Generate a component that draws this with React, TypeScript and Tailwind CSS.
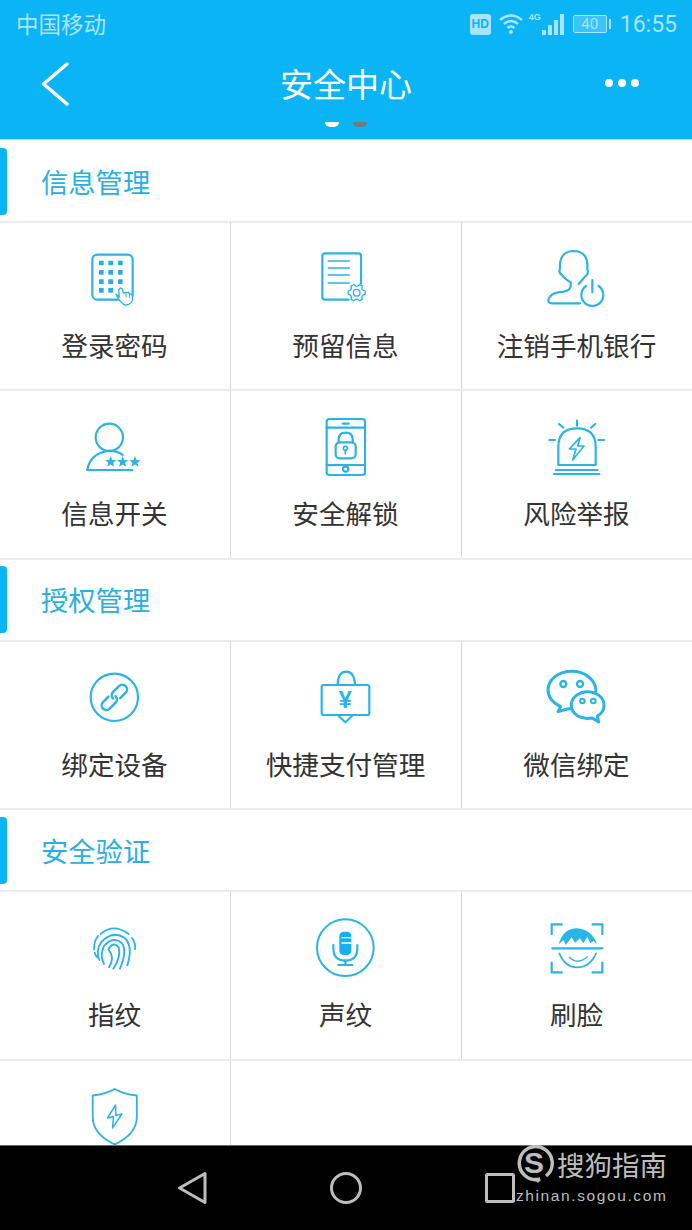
import type { ReactNode } from 'react'

const CJK = 'font-["Noto_Sans_CJK_SC","Noto_Sans",sans-serif]'
const BLUE = '#2cb3e6'

// icons are traced at 3x, so every one is a 90x90 tile on a 270 unit grid
function Tile({ box, children }: { box: string; children: ReactNode }) {
    return (
        <svg
            width={90}
            height={90}
            viewBox={box}
            fill="none"
            stroke={BLUE}
            strokeWidth={6.5}
            strokeLinecap="round"
            strokeLinejoin="round"
        >
            {children}
        </svg>
    )
}

function starPoints(cx: number, cy: number, r: number) {
    const pts: string[] = []
    for (let i = 0; i < 10; i++) {
        const rad = i % 2 === 0 ? r : r * 0.42
        const a = (Math.PI / 5) * i - Math.PI / 2
        pts.push(`${cx + rad * Math.cos(a)},${cy + rad * Math.sin(a)}`)
    }
    return pts.join(' ')
}

function gearPoints(cx: number, cy: number, outer: number, inner: number, teeth: number) {
    const pts: string[] = []
    for (let i = 0; i < teeth; i++) {
        const a = ((Math.PI * 2) / teeth) * i
        const w = (Math.PI * 2) / teeth / 4.5
        pts.push(`${cx + inner * Math.cos(a - w * 1.6)},${cy + inner * Math.sin(a - w * 1.6)}`)
        pts.push(`${cx + outer * Math.cos(a - w * 0.8)},${cy + outer * Math.sin(a - w * 0.8)}`)
        pts.push(`${cx + outer * Math.cos(a + w * 0.8)},${cy + outer * Math.sin(a + w * 0.8)}`)
        pts.push(`${cx + inner * Math.cos(a + w * 1.6)},${cy + inner * Math.sin(a + w * 1.6)}`)
    }
    return pts.join(' ')
}

const KeypadIcon = () => (
    <Tile box="30 0 270 270">
        <rect x={97} y={59} width={121} height={135} rx={15} />
        {[84, 112, 140, 166].map((y) =>
            [124, 152, 181].map((x) =>
                y === 166 && x === 181 ? null : (
                    <rect key={`${x}-${y}`} x={x - 7} y={y - 7} width={14} height={14} rx={1} fill="#25aee6" stroke="none" />
                ),
            ),
        )}
        <path
            d="M168 178 L178 186 L176 164 Q182 154 188 164 L190 174 L204 172 L216 180 Q220 194 214 202 Q204 213 192 209 Q178 200 168 178 Z"
            fill="#fff"
            strokeWidth={4}
        />
        <path d="M198 174 V186 M208 177 V188" strokeWidth={3} />
    </Tile>
)

const ReservedInfoIcon = () => (
    <Tile box="723 0 270 270">
        <path d="M866 194 H795 Q787 194 787 186 V63 Q787 55 795 55 H895 Q903 55 903 63 V146" />
        <path d="M805 78 H868 M805 99 H868 M805 120 H868 M805 144 H868" strokeWidth={5} />
        <polygon points={gearPoints(890, 173, 26, 20, 6)} strokeWidth={4} />
        <circle cx={890} cy={173} r={10} strokeWidth={4} />
    </Tile>
)

const LogoutIcon = () => (
    <Tile box="6 0 270 270">
        <path d="M150 205 H66 Q54 205 55 195 Q60 175 85 172 Q118 170 122 155 V142 Q104 132 96 120 Q84 112 90 102 Q86 50 130 48 Q176 48 172 102 Q178 116 165 125 L146 147" />
        <path d="M168 153 A33 33 0 1 0 206 153" />
        <path d="M187 135 V172" />
    </Tile>
)

const PersonStarsIcon = () => (
    <Tile box="0 -21 270 270">
        <circle cx={118} cy={82} r={41} />
        <path d="M52 180 Q60 130 118 122 Q145 124 158 135" />
        <path d="M52 180 H187" />
        {[122, 158, 195].map((x) => (
            <polygon key={x} points={starPoints(x, 156, 18)} fill={BLUE} stroke="none" />
        ))}
    </Tile>
)

const PhoneLockIcon = () => (
    <Tile box="693 -21 270 270">
        <rect x={770} y={27} width={115} height={168} rx={8} />
        <path d="M770 53 H885 M770 165 H885" />
        <path d="M818 41 H836" />
        <circle cx={827} cy={177} r={8} />
        <rect x={797} y={97} width={60} height={48} rx={12} />
        <path d="M806 97 V88 Q806 68 827 68 Q848 68 848 88 V97" />
        <circle cx={826} cy={115} r={6} strokeWidth={5} />
        <path d="M826 121 V132" strokeWidth={5} />
    </Tile>
)

const AlarmIcon = () => (
    <Tile box="6 -21 270 270">
        <path d="M85 165 V110 Q85 55 141 55 Q197 55 197 110 V165 Z" />
        <path d="M77 180 H203 M72 192 H208" />
        <path d="M141 32 V47 M87 42 L100 53 M196 42 L183 53 M58 90 H75 M205 90 H222" />
        <path d="M150 83 L118 117 H138 L128 150 L162 108 H143 Z" strokeWidth={5} />
    </Tile>
)

const LinkIcon = () => (
    <Tile box="0 -18 270 270">
        <circle cx={133} cy={112} r={71} />
        <g transform="rotate(-45 133 112)" strokeWidth={7.5}>
            <path d="M122 98 H99 A14 14 0 0 0 99 126 H124 A14 14 0 0 0 138 112" />
            <path d="M128 112 A14 14 0 0 1 142 98 H167 A14 14 0 0 1 167 126 H144" />
        </g>
    </Tile>
)

const PayBagIcon = () => (
    <Tile box="693 -18 270 270">
        <rect x={755} y={75} width={143} height={90} rx={6} />
        <path d="M803 72 Q805 35 828 35 Q852 35 855 72" />
        <path d="M805 167 L826 187 L847 167" />
        <text
            x={826}
            y={143}
            textAnchor="middle"
            fontSize={70}
            fontWeight={700}
            fontFamily="Liberation Sans"
            fill={BLUE}
            stroke="none"
        >
            ¥
        </text>
    </Tile>
)

const WechatIcon = () => (
    <Tile box="6 -18 270 270">
        <g strokeWidth={9}>
            <path d="M92 140 C68 128 54 110 54 90 C54 58 86 34 125 34 C164 34 196 58 198 92 C196 118 150 146 112 147 L84 155 Z" />
            <circle cx={100} cy={72} r={9} strokeWidth={7} />
            <circle cx={150} cy={72} r={9} strokeWidth={7} />
            <path
                d="M173 95 C200 95 222 113 222 135 C222 150 214 162 202 168 L206 186 L186 174 C148 180 124 160 124 135 C124 113 146 95 173 95 Z"
                fill="#fff"
            />
            <circle cx={157} cy={123} r={7} strokeWidth={6} />
            <circle cx={190} cy={123} r={7} strokeWidth={6} />
        </g>
    </Tile>
)

const FingerprintIcon = () => (
    <Tile box="0 -18 270 270">
        <g strokeWidth={5.5}>
            <path d="M92 72 Q130 38 176 72" />
            <path d="M72 118 Q72 92 84 78" />
            <path d="M186 84 Q198 100 195 118" />
            <path d="M74 128 Q76 136 82 142" />
            <path d="M88 150 Q76 122 94 96 Q128 60 164 84 Q190 108 172 166" />
            <path d="M102 162 Q88 136 102 108 Q130 76 156 100 Q172 124 150 176" />
            <path d="M117 172 Q136 142 115 118 Q130 92 146 112 Q154 140 130 176" />
        </g>
    </Tile>
)

const MicIcon = () => (
    <Tile box="693 -18 270 270">
        <circle cx={826} cy={113} r={85} strokeWidth={6} />
        <rect x={808} y={65} width={36} height={70} rx={13} fill="#12b1f0" stroke="none" />
        <path d="M816 83 H844 M816 99 H844" stroke="#fff" strokeWidth={4} />
        <path d="M790 105 V115 Q790 152 826 152 Q862 152 862 115 V105" />
        <path d="M826 152 V165 M805 165 H847" />
    </Tile>
)

const FaceIcon = () => (
    <Tile box="6 -18 270 270">
        <path d="M65 75 V43 H98 M185 43 H217 V75 M65 155 V187 H98 M185 187 H217 V155" strokeLinecap="butt" strokeLinejoin="miter" />
        <path d="M67 115 H217" />
        <path
            d="M86 103 Q100 55 141 55 Q185 58 201 103 L190 93 L181 100 L172 80 L160 100 L150 85 L135 98 L125 82 L107 105 L101 90 Z"
            fill="#29b4ea"
            stroke="none"
        />
        <path d="M88 130 Q105 172 141 172 Q180 172 198 130" strokeWidth={5} />
        <path d="M118 142 Q142 166 172 140" strokeWidth={4} />
    </Tile>
)

// this one was traced from a wider crop, so the x range is narrower
const ShieldIcon = () => (
    <svg width={90} height={90} viewBox="70 1073 90 90" fill="none" stroke={BLUE} strokeLinejoin="round">
        <path
            d="M114.7 1089 Q106 1094 92.7 1095.5 V1117 Q92.7 1134 114.7 1144.5 Q136.8 1134 136.8 1117 V1095.5 Q123 1094 114.7 1089 Z"
            strokeWidth={1.8}
        />
        <path d="M115.6 1105 L107.5 1118 L113.5 1116.5 L112.5 1128 L121.8 1114 L115.8 1115.5 Z" strokeWidth={1.5} />
    </svg>
)

type Item = { label?: string; icon: ReactNode }

const sections: { title: string; items: Item[] }[] = [
    {
        title: '信息管理',
        items: [
            { label: '登录密码', icon: <KeypadIcon /> },
            { label: '预留信息', icon: <ReservedInfoIcon /> },
            { label: '注销手机银行', icon: <LogoutIcon /> },
            { label: '信息开关', icon: <PersonStarsIcon /> },
            { label: '安全解锁', icon: <PhoneLockIcon /> },
            { label: '风险举报', icon: <AlarmIcon /> },
        ],
    },
    {
        title: '授权管理',
        items: [
            { label: '绑定设备', icon: <LinkIcon /> },
            { label: '快捷支付管理', icon: <PayBagIcon /> },
            { label: '微信绑定', icon: <WechatIcon /> },
        ],
    },
    {
        title: '安全验证',
        items: [
            { label: '指纹', icon: <FingerprintIcon /> },
            { label: '声纹', icon: <MicIcon /> },
            { label: '刷脸', icon: <FaceIcon /> },
            // label of this one sits under the nav bar
            { icon: <ShieldIcon /> },
        ],
    },
]

function StatusBar() {
    return (
        <div className="h-[48px] flex items-center justify-between pl-[16px] pr-[15px] text-[#a9e4fb]">
            <span className={`${CJK} text-[22.5px] leading-none -mt-[2px]`}>中国移动</span>
            <div className="flex items-center">
                <span className="w-[21px] h-[21px] rounded-[3px] bg-[#a9e4fb] text-[#0bb5f5] text-[12px] font-bold flex items-center justify-center font-['Liberation_Sans',sans-serif]">
                    HD
                </span>
                <svg width={26} height={22} viewBox="0 0 26 22" fill="none" stroke="#a9e4fb" strokeWidth={2.5} className="ml-[7px]">
                    <path d="M2 7 Q13 -2 24 7" />
                    <path d="M6 11 Q13 5 20 11" />
                    <path d="M9.5 15 Q13 12 16.5 15" />
                    <circle cx={13} cy={19} r={2} fill="#a9e4fb" stroke="none" />
                </svg>
                <div className="ml-[5px] relative w-[35px] h-[22px]">
                    <span className="absolute left-0 top-0 text-[9px] leading-none font-bold font-['Liberation_Sans',sans-serif]">4G</span>
                    <div className="absolute right-0 bottom-0 flex items-end gap-[2px]">
                        <span className="w-[4px] h-[5px] bg-[#a9e4fb]" />
                        <span className="w-[4px] h-[10px] bg-[#a9e4fb]" />
                        <span className="w-[4px] h-[15px] bg-[#a9e4fb]" />
                        <span className="w-[4px] h-[21px] bg-[#a9e4fb]" />
                    </div>
                </div>
                <div className="ml-[9px] w-[34px] h-[18px] border border-[#a9e4fb] rounded-[2px] bg-[#5fcdf8]/60 flex items-center justify-center text-[15px] leading-none font-['Roboto',sans-serif]">
                    40
                </div>
                <span className="ml-[2px] w-[2px] h-[10px] bg-[#a9e4fb]" />
                <span className="ml-[9px] text-[23px] leading-none font-['Roboto',sans-serif]">16:55</span>
            </div>
        </div>
    )
}

function TopBar() {
    return (
        <header className="bg-[#0bb5f5] shrink-0 h-[140px] border-b border-[#9fe6fb]">
            <StatusBar />
            <div className="h-[72px] flex items-center justify-center">
                <div className="w-[280px] shrink-0 pl-[40px]">
                    <svg width={30} height={46} viewBox="0 0 30 46" fill="none" stroke="#fff" strokeWidth={3.5} strokeLinecap="round" strokeLinejoin="round">
                        <path d="M27 3 L3.5 23 L27 43" />
                    </svg>
                </div>
                <h1 className={`${CJK} text-[33px] leading-none text-white font-normal -mt-[2px] whitespace-nowrap`}>安全中心</h1>
                <div className="w-[280px] shrink-0 flex justify-end gap-[5px] pr-[53px] -mt-[2px]">
                    <span className="w-[8px] h-[8px] rounded-full bg-white" />
                    <span className="w-[8px] h-[8px] rounded-full bg-white" />
                    <span className="w-[8px] h-[8px] rounded-full bg-white" />
                </div>
            </div>
            <div className="flex justify-center gap-[14px] pt-[2px]">
                <span className="w-[14px] h-[5px] rounded-b-full bg-white" />
                <span className="w-[14px] h-[5px] rounded-b-full bg-[#6f7a80]" />
            </div>
        </header>
    )
}

function NavBar() {
    return (
        <footer className="relative shrink-0 h-[85px] bg-black border-t border-[#666] flex items-center justify-center gap-[114px]">
            <svg width={40} height={40} viewBox="0 0 40 40" fill="none" stroke="#bdbdbd" strokeWidth={3} strokeLinejoin="round">
                <path d="M33 5.5 V34.5 L7.5 20 Z" />
            </svg>
            <svg width={40} height={40} viewBox="0 0 40 40" fill="none" stroke="#bdbdbd" strokeWidth={3}>
                <circle cx={20} cy={20} r={14.5} />
            </svg>
            <svg width={40} height={40} viewBox="0 0 40 40" fill="none" stroke="#bdbdbd" strokeWidth={3} strokeLinejoin="round">
                <rect x={6.5} y={6.5} width={27} height={27} rx={1} />
            </svg>
            {/* watermark */}
            <div className="absolute left-[516px] top-0 w-[152px] h-[70px] text-[#bdbdbd]">
                <svg width={38} height={40} viewBox="0 0 38 40" className="absolute left-0 -top-[1px]" fill="none" stroke="#bdbdbd">
                    <path d="M30 31 A16.5 16.5 0 1 0 24 34" strokeWidth={3.5} />
                    <path d="M24 34 L21 37" strokeWidth={2.5} />
                    <text x={18} y={28} textAnchor="middle" fontSize={30} fontWeight={700} fontFamily="Liberation Sans" fill="#bdbdbd" stroke="none">
                        S
                    </text>
                </svg>
                <span className={`${CJK} absolute left-[41px] top-[1px] text-[27.5px] leading-[34px] whitespace-nowrap`}>搜狗指南</span>
                <span className="absolute left-0 top-[40px] text-[15.5px] leading-[20px] tracking-[1.6px] whitespace-nowrap font-['Liberation_Sans',sans-serif]">
                    zhinan.sogou.com
                </span>
            </div>
        </footer>
    )
}

export default function App() {
    return (
        <div className={`${CJK} w-full h-[1230px] flex flex-col overflow-hidden bg-white`}>
            <TopBar />
            <main className="flex-1 min-h-0 overflow-hidden">
                {sections.map((section, s) => (
                    <section key={section.title}>
                        <div className={`flex items-center ${s === 0 ? 'h-[81px] pt-[2px]' : 'h-[82px] border-t-2 border-[#ececec]'}`}>
                            <span className="w-[7px] h-[67px] rounded-r-[4px] bg-[#0bb5f5]" />
                            <h2 className="ml-[34px] text-[27.3px] leading-none font-normal text-[#2daee0]">{section.title}</h2>
                        </div>
                        <div className="grid grid-cols-[231px_231px_230px]">
                            {section.items.map((item, i) => (
                                <div
                                    key={`${section.title}-${i}`}
                                    className={`h-[168.4px] border-t-2 border-t-[#ececec] pt-[12px] flex flex-col items-center ${
                                        i % 3 === 2 ? '' : 'border-r border-r-[#d9d9d9]'
                                    }`}
                                >
                                    <div className="w-[90px] h-[90px]">{item.icon}</div>
                                    {item.label && (
                                        <span className="mt-[2px] pr-[1px] text-[26.6px] leading-[36px] text-[#333] whitespace-nowrap">{item.label}</span>
                                    )}
                                </div>
                            ))}
                            {section.items.length % 3 === 1 && <div className="col-span-2 border-t-2 border-t-[#ececec]" />}
                        </div>
                    </section>
                ))}
            </main>
            <NavBar />
        </div>
    )
}
